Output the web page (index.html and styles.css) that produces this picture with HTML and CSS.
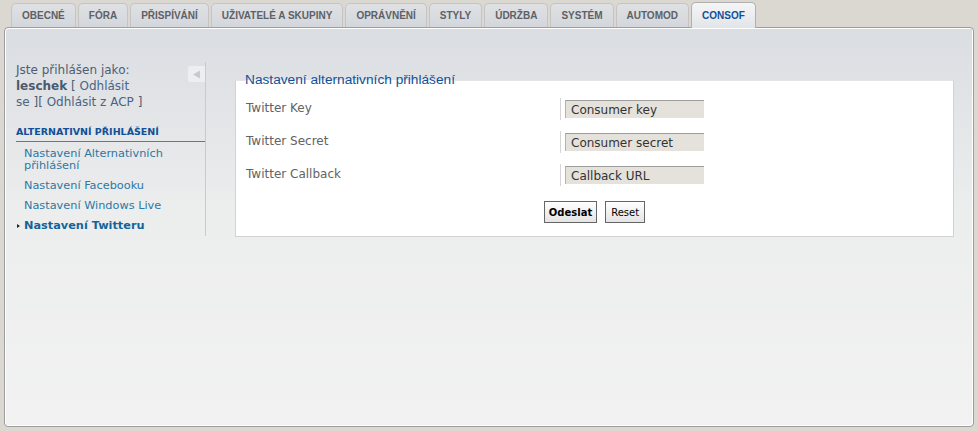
FILE: index.html
```html
<!DOCTYPE html>
<html lang="cs">
<head>
<meta charset="utf-8">
<title>ACP</title>
<link rel="stylesheet" href="styles.css">
</head>
<body>
<div class="tabs">
  <span class="tab">OBECNÉ</span>
  <span class="tab">FÓRA</span>
  <span class="tab">PŘISPÍVÁNÍ</span>
  <span class="tab">UŽIVATELÉ A SKUPINY</span>
  <span class="tab">OPRÁVNĚNÍ</span>
  <span class="tab">STYLY</span>
  <span class="tab">ÚDRŽBA</span>
  <span class="tab">SYSTÉM</span>
  <span class="tab">AUTOMOD</span>
  <span class="tab active">CONSOF</span>
</div>
<div class="panel">
  <div class="sidebar">
    <div class="userbox">
      <span class="toggle"><svg width="9" height="9" viewBox="0 0 9 9"><path d="M1 4.5 L8 0.5 L8 8.5 Z" fill="#c6c9cd"/></svg></span>
      <p class="user">Jste přihlášen jako:<br><b>leschek</b> [ <a>Odhlásit</a><br><a>se</a> ][ <a>Odhlásit z ACP</a> ]</p>
    </div>
    <h4 class="menu-head">ALTERNATIVNÍ PŘIHLÁŠENÍ</h4>
    <ul class="menu">
      <li>Nastavení Alternativních přihlášení</li>
      <li>Nastavení Facebooku</li>
      <li>Nastavení Windows Live</li>
      <li class="current">Nastavení Twitteru</li>
    </ul>
  </div>
  <div class="main">
    <fieldset class="box">
      <legend>Nastavení alternativních přihlášení</legend>
      <div class="row"><div class="label">Twitter Key</div><div class="field"><span class="input">Consumer key</span></div></div>
      <div class="row"><div class="label">Twitter Secret</div><div class="field"><span class="input">Consumer secret</span></div></div>
      <div class="row"><div class="label">Twitter Callback</div><div class="field"><span class="input">Callback URL</span></div></div>
      <div class="buttons"><button class="btn primary">Odeslat</button><button class="btn">Reset</button></div>
    </fieldset>
  </div>
</div>
</body>
</html>
```
FILE: styles.css
```css
html, body { margin: 0; padding: 0; }
body {
  background: #dbd8d1;
  font-family: "DejaVu Sans", Verdana, sans-serif;
  font-size: 11px;
  width: 978px;
  height: 431px;
  overflow: hidden;
}
.tabs {
  display: flex;
  gap: 2px;
  padding: 3px 0 0 11px;
  height: 24px;
  position: relative;
  z-index: 2;
}
.tab {
  display: flex;
  align-items: center;
  height: 23px;
  padding: 0 10px;
  border: 1px solid #c4c4c4;
  border-bottom: none;
  border-radius: 5px 5px 0 0;
  background: linear-gradient(#dfe1e4, #d3d6db);
  color: #5d6166;
  font-family: "Liberation Sans", Arial, sans-serif;
  font-weight: bold;
  font-size: 10px;
}
.tab.active {
  height: 25px;
  margin-top: -1px;
  background: linear-gradient(#f4f5f6, #e2e5e9);
  color: #115098;
  border-color: #b0b0b0;
}
.panel {
  margin: 0 4px;
  border: 1px solid #9d9d9d;
  border-radius: 4px;
  box-shadow: inset 1px 1px 0 #fff, inset -1px -1px 0 #fff;
  background: linear-gradient(#dadde2 0%, #eceded 45%, #f2f2f2 100%);
  display: flex;
  align-items: flex-start;
  padding: 34px 19px 0 11px;
  box-sizing: border-box;
  height: 400px;
}
.sidebar {
  width: 189px;
  border-right: 1px solid #c9cacc;
  padding-bottom: 4px;
  flex: none;
}
.toggle {
  float: right;
  width: 17px;
  height: 16px;
  margin-top: 4px;
  background: #eceef0;
  border-radius: 2px 0 0 2px;
  display: flex;
  align-items: center;
  justify-content: center;
}
.user {
  margin: 0;
  width: 127px;
  color: #4f5d73;
  font-size: 12px;
  line-height: 16px;
}
.user b { color: #4c5a6e; }
.user a { color: #4a6583; }
.menu-head {
  margin: 16px 0 0;
  padding-bottom: 3px;
  border-bottom: 1px solid #4c7ea8;
  color: #115098;
  font-size: 9.5px;
  font-weight: bold;
  line-height: 12px;
}
.menu {
  list-style: none;
  margin: 6px 0 0;
  padding: 0 0 0 8px;
  font-size: 11.3px;
}
.menu li {
  line-height: 12px;
  margin-bottom: 8px;
  color: #2b78a6;
  width: 165px;
}
.menu li.current { position: relative; font-weight: bold; color: #14649a; margin-bottom: 0; }
.menu li.current::before {
  content: "";
  position: absolute;
  left: -7px;
  top: 4px;
  border-left: 3px solid #222;
  border-top: 2px solid transparent;
  border-bottom: 2px solid transparent;
}
.main {
  flex: 1;
  margin-left: 29px;
  padding-top: 11px;
}
.box {
  margin: 0;
  padding: 11px 10px 13px;
  background: #fff;
  border: 1px solid #d2d2d2;
  border-top-color: #e4e4e4;
  min-width: 0;
}
.box legend {
  padding: 0;
  margin-left: -1px;
  color: #115098;
  font-family: "Liberation Sans", Arial, sans-serif;
  font-size: 13.7px;
  line-height: 14px;
}
.row {
  display: flex;
  height: 22px;
  margin-bottom: 11px;
  font-size: 12px;
}
.label {
  width: 314px;
  color: #616365;
  padding-top: 3px;
}
.field {
  border-left: 1px solid #d5d5d5;
  padding: 2px 0 0 4px;
}
.input {
  display: block;
  width: 133px;
  height: 17px;
  line-height: 18px;
  padding-left: 5px;
  background: #e5e2dc;
  border-top: 1px solid #9c9c9c;
  border-left: 1px solid #b2b2b2;
  color: #333;
}
.buttons {
  display: flex;
  justify-content: center;
  gap: 8px;
  padding-top: 4px;
}
.btn {
  height: 22px;
  border: 1px solid #666;
  background: linear-gradient(#ffffff, #e4e4e4);
  font-family: "DejaVu Sans", Verdana, sans-serif;
  font-size: 10px;
  color: #000;
  padding: 0 5px;
  margin: 0;
}
.btn.primary { font-weight: bold; padding: 0 4px; }
```
